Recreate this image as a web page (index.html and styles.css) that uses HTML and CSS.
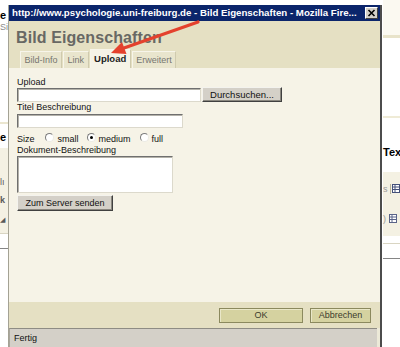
FILE: index.html
```html
<!DOCTYPE html>
<html lang="de">
<head>
<meta charset="utf-8">
<title>Bild Eigenschaften</title>
<link rel="stylesheet" href="styles.css">
</head>
<body>
<div class="page">
  <div class="strip strip-left">
    <div class="sp sp-9"></div>
    <div class="bg-bold">e</div>
    <div class="bg-gray">Si</div>
    <div class="sp sp-89"></div>
    <div class="bg-line beige"></div>
    <div class="sp sp-7"></div>
    <div class="bg-bold">e</div>
    <div class="sp sp-5"></div>
    <div class="band band-left">
      <div class="glyph g-1">lı</div>
      <div class="glyph g-2">k</div>
      <div class="glyph g-3">◢</div>
    </div>
    <div class="hr light"></div>
    <div class="sp sp-14"></div>
    <div class="hr dark"></div>
  </div>
  <div class="strip strip-right">
    <div class="top-cream"></div>
    <div class="bg-line beige3"></div>
    <div class="sp sp-78"></div>
    <div class="bg-line cream"></div>
    <div class="sp sp-28"></div>
    <div class="bg-bold">Tex</div>
    <div class="sp sp-14"></div>
    <div class="band band-right">
      <div class="tool t-1"><span class="tg">s</span><span class="sep"></span><svg class="ticon" viewBox="0 0 8 9" width="8" height="9"><rect x="0.5" y="0.5" width="7" height="8" fill="#fff" stroke="#44507a"/><path d="M0.5 3H7.5M0.5 5.5H7.5M3 0.5V8.5" stroke="#44507a" stroke-width="1"/></svg></div>
      <div class="tool t-2"><span class="tg">)</span><svg class="ticon" viewBox="0 0 8 9" width="8" height="9"><rect x="0.5" y="0.5" width="7" height="8" fill="#fff" stroke="#5a6488"/><path d="M0.5 3H7.5M0.5 5.5H7.5M3 0.5V8.5" stroke="#5a6488" stroke-width="1"/></svg></div>
    </div>
    <div class="sp sp-7"></div>
    <div class="hr light"></div>
    <div class="sp sp-14"></div>
    <div class="hr dark"></div>
  </div>
</div>

<div class="window">
  <div class="titlebar">
    <span class="title-text">http://www.psychologie.uni-freiburg.de - Bild Eigenschaften - Mozilla Fire...</span>
    <span class="close"><svg viewBox="0 0 9 8" width="9" height="8"><path d="M1.5 1L7.5 7M7.5 1L1.5 7" stroke="#000" stroke-width="1.6"/></svg></span>
  </div>
  <div class="header">
    <h1 class="dlg-title">Bild Eigenschaften</h1>
    <div class="tabs">
      <span class="tab">Bild-Info</span>
      <span class="tab">Link</span>
      <span class="tab tab-on">Upload</span>
      <span class="tab">Erweitert</span>
    </div>
  </div>
  <div class="content">
    <div class="label l-upload">Upload</div>
    <div class="file-row">
      <input class="field f-upload" type="text">
      <button class="btn-gray b-browse" type="button">Durchsuchen...</button>
    </div>
    <div class="label l-title">Titel Beschreibung</div>
    <input class="field f-title" type="text">
    <div class="size-row">
      <span class="opt">Size</span>
      <span class="radio r-1"></span><span class="opt">small</span>
      <span class="radio on r-2"></span><span class="opt">medium</span>
      <span class="radio r-3"></span><span class="opt">full</span>
    </div>
    <div class="label l-doc">Dokument-Beschreibung</div>
    <textarea class="field f-doc"></textarea>
    <button class="btn-gray b-send" type="button">Zum Server senden</button>
  </div>
  <div class="buttonbar">
    <button class="btn-olive b-ok" type="button">OK</button>
    <button class="btn-olive b-cancel" type="button">Abbrechen</button>
  </div>
  <div class="statusbar">Fertig</div>
</div>

<svg class="arrow" viewBox="0 0 400 347" width="400" height="347">
  <line x1="198" y1="22" x2="124" y2="48" stroke="#e4412d" stroke-width="3.2" stroke-linecap="round"/>
  <polygon points="111,53 126.5,54 122,42" fill="#e4412d"/>
</svg>
</body>
</html>
```

FILE: styles.css
```css
html, body {
  margin: 0;
  padding: 0;
}
body {
  width: 400px;
  height: 347px;
  position: relative;
  overflow: hidden;
  background: #ffffff;
  font-family: "Liberation Sans", Arial, sans-serif;
  font-size: 9px;
  color: #111;
}

/* background page (behind the popup window) */
.page {
  display: flex;
  justify-content: space-between;
  height: 347px;
}
.strip {
  display: flex;
  flex-direction: column;
  overflow: hidden;
  white-space: nowrap;
}
.strip-left { width: 8px; }
.strip-right { width: 18px; padding-left: 1px; box-sizing: border-box; }
.sp { flex: none; }
.sp-5 { height: 5px; }
.sp-7 { height: 7px; }
.sp-9 { height: 9px; }
.sp-14 { height: 14px; }
.sp-28 { height: 28px; }
.sp-78 { height: 78px; }
.sp-89 { height: 89px; }
.bg-bold {
  height: 12px;
  line-height: 12px;
  font-weight: bold;
  font-size: 11px;
  color: #000;
}
.bg-gray {
  height: 12px;
  line-height: 12px;
  font-size: 9px;
  color: #8a8a8a;
}
.bg-line { flex: none; height: 2px; }
.bg-line.beige { background: #ebe6cf; }
.bg-line.beige3 { height: 3px; background: #e8e3ca; }
.bg-line.cream { background: #efebd6; }
.top-cream { height: 35px; background: #fbf9f1; flex: none; }
.hr { height: 1px; flex: none; }
.hr.light { background: #d9d5c2; }
.hr.dark { background: #858585; }
.band { flex: none; background: #f4f1e3; position: relative; }
.band-left { height: 85px; }
.band-right { height: 64px; }
.glyph {
  font-size: 9px;
  line-height: 10px;
  color: #5a5a5a;
}
.g-1 { margin-top: 29px; }
.g-2 { margin-top: 8px; font-weight: bold; }
.g-3 { margin-top: 10px; font-size: 7px; }
.tool {
  display: flex;
  align-items: center;
  height: 11px;
  gap: 2px;
}
.t-1 { margin-top: 11px; }
.t-2 { margin-top: 19px; gap: 3px; }
.tg { color: #9a9a9a; font-size: 9px; }
.sep { width: 1px; height: 10px; background: #b8b39a; }
.ticon { flex: none; }

/* popup window */
.window {
  position: absolute;
  left: 8px;
  top: 5px;
  width: 374px;
  height: 342px;
  box-sizing: border-box;
  border-left: 1px solid #a4a294;
  border-right: 2px solid #4c4c4c;
  background: #ece9d8;
  display: flex;
  flex-direction: column;
}
.titlebar {
  flex: none;
  height: 16px;
  background: #0b256b;
  color: #fff;
  display: flex;
  align-items: center;
  justify-content: space-between;
  padding: 0 2px 0 3px;
}
.title-text {
  font-weight: bold;
  font-size: 9.7px;
  white-space: nowrap;
  line-height: 16px;
}
.close {
  width: 11px;
  height: 10px;
  background: #d4d0c8;
  border: 1px solid;
  border-color: #fff #404040 #404040 #fff;
  display: flex;
  align-items: center;
  justify-content: center;
}
.header {
  flex: none;
  height: 47px;
  box-sizing: border-box;
  background: #e5e0c3;
  display: flex;
  flex-direction: column;
  justify-content: space-between;
  padding-left: 7px;
}
.dlg-title {
  margin: 8px 0 0 0;
  font-size: 16px;
  line-height: 18px;
  font-weight: bold;
  color: #686864;
  letter-spacing: 0.1px;
}
.tabs {
  display: flex;
  align-items: flex-end;
  gap: 1px;
  margin-left: 4px;
  height: 19px;
}
.tab {
  height: 17px;
  box-sizing: border-box;
  line-height: 16px;
  padding: 0 3.5px;
  font-size: 9px;
  color: #767670;
  background: #e9e5cd;
  border: 1px solid;
  border-bottom: none;
  border-color: #f7f5ea #cfcaae transparent #f7f5ea;
}
.tab-on {
  height: 19px;
  line-height: 18px;
  background: #f6f3e7;
  color: #222;
  font-weight: bold;
  font-size: 9.5px;
}
.content {
  flex: 1;
  background: #f6f3e7;
  padding: 9px 0 0 8px;
  display: flex;
  flex-direction: column;
  align-items: flex-start;
}
.label {
  line-height: 11px;
  height: 11px;
  color: #111;
  white-space: nowrap;
}
.l-upload { height: 10px; line-height: 10px; }
.l-title { height: 12px; }
.l-doc { height: 11px; }
.file-row {
  display: flex;
  align-items: center;
  gap: 1px;
  height: 15px;
}
.field {
  box-sizing: border-box;
  margin: 0;
  padding: 0;
  background: #fff;
  border: 1px solid;
  border-color: #6f6f6f #dcd9cc #dcd9cc #6f6f6f;
  box-shadow: inset 1px 1px 0 #b4b2aa;
  font: inherit;
  outline: none;
  resize: none;
  display: block;
}
.f-upload { width: 184px; height: 14px; }
.f-title { width: 166px; height: 14px; }
.f-doc { width: 156px; height: 37px; }
.btn-gray {
  box-sizing: border-box;
  margin: 0;
  padding: 0;
  background: #d4d0c8;
  border: 1px solid;
  border-color: #f4f3ee #404040 #404040 #f4f3ee;
  box-shadow: inset -1px -1px 0 #8a877f;
  font-family: inherit;
  color: #111;
}
.b-browse { width: 80px; height: 15px; font-size: 9.5px; }
.b-send { width: 96px; height: 16px; font-size: 9px; margin-top: 2px; }
.size-row {
  display: flex;
  align-items: center;
  margin-top: 5px;
  height: 12px;
  white-space: nowrap;
}
.opt { color: #111; }
.radio {
  width: 9px;
  height: 9px;
  box-sizing: border-box;
  border-radius: 50%;
  background: #fff;
  border: 1px solid;
  border-color: #7c7c7c #ecebe4 #ecebe4 #7c7c7c;
  position: relative;
  margin-top: -4px;
}
.radio.on::after {
  content: "";
  position: absolute;
  left: 2px;
  top: 2px;
  width: 3px;
  height: 3px;
  border-radius: 50%;
  background: #000;
}
.r-1 { margin-left: 10px; margin-right: 4px; }
.r-2 { margin-left: 8px; margin-right: 3px; }
.r-3 { margin-left: 9px; margin-right: 3px; }
.buttonbar {
  flex: none;
  height: 26px;
  background: #e5e0c3;
  display: flex;
  justify-content: flex-end;
  align-items: center;
  gap: 7px;
  padding-right: 9px;
}
.btn-olive {
  box-sizing: border-box;
  margin: 0;
  padding: 0;
  height: 15px;
  background: #d5d2a0;
  border: 1px solid #8b895e;
  box-shadow: inset 1px 1px 0 #e9e7c8;
  font-family: inherit;
  font-size: 9px;
  color: #3c3c2c;
}
.b-ok { width: 84px; }
.b-cancel { width: 61px; }
.statusbar {
  flex: none;
  height: 19px;
  box-sizing: border-box;
  margin-right: 3px;
  background: #d4d0c8;
  border-top: 1px solid #8e8c84;
  border-left: 1px solid #a8a69c;
  padding-left: 4px;
  line-height: 18px;
  color: #111;
}

/* annotation arrow over the screenshot */
.arrow {
  position: absolute;
  left: 0;
  top: 0;
  pointer-events: none;
}
```
